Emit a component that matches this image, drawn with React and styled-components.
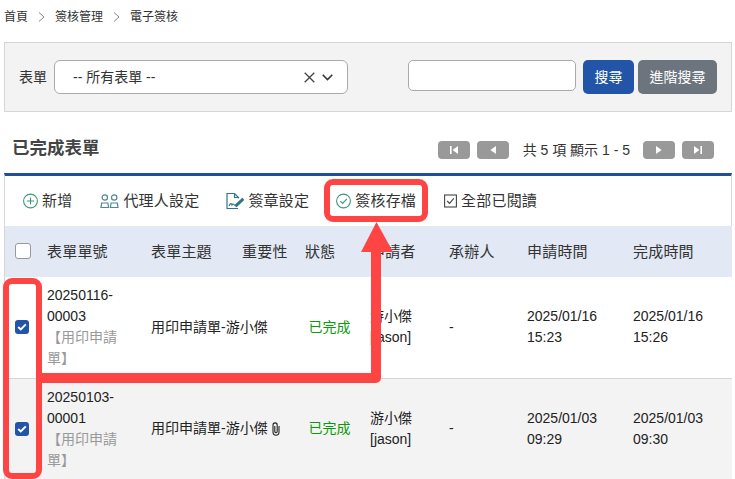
import React from 'react';
import styled, { createGlobalStyle } from 'styled-components';

const GlobalStyle = createGlobalStyle`
  html, body {
    margin: 0;
    padding: 0;
    height: 479px;
    overflow: hidden;
    background: #fff;
  }
  body {
    font-family: "Liberation Sans", "Noto Sans CJK TC", sans-serif;
    font-size: 14px;
    line-height: 21px;
    color: #222;
  }
`;

const Page = styled.div`
  position: relative;
  width: 735px;
  height: 479px;
  overflow: hidden;
  padding: 0 3px 0 4px;
  box-sizing: border-box;
`;

const Breadcrumb = styled.nav`
  display: flex;
  align-items: center;
  height: 42px;
  padding-bottom: 8px;
  box-sizing: border-box;
  font-size: 12px;
  color: #333;
`;

const Crumb = styled.span`
  line-height: 18px;
`;

const CrumbSep = styled.svg`
  width: 7px;
  height: 10px;
  margin: 0 10px;
  fill: none;
  stroke: #888;
  stroke-width: 1;
`;

const SearchPanel = styled.section`
  display: flex;
  align-items: flex-start;
  height: 70px;
  box-sizing: border-box;
  padding: 17px 14px 0 14px;
  background: #f3f3f3;
  border: 1px solid #d6d6d6;
`;

const FieldLabel = styled.label`
  flex: none;
  line-height: 34px;
  margin-right: 7px;
  color: #333;
`;

const SelectBox = styled.div`
  display: flex;
  align-items: center;
  flex: none;
  width: 294px;
  height: 34px;
  box-sizing: border-box;
  padding: 0 14px 0 18px;
  background: #fff;
  border: 1px solid #aaa;
  border-radius: 6px;
  color: #333;
`;

const SelectText = styled.span`
  flex: 1;
`;

const SearchInput = styled.input`
  flex: none;
  width: 168px;
  height: 31px;
  box-sizing: border-box;
  margin: 0 7px 0 60px;
  background: #fff;
  border: 1px solid #aaa;
  border-radius: 5px;
`;

const Button = styled.button`
  flex: none;
  height: 34px;
  width: ${(p) => p.$width}px;
  margin-right: ${(p) => p.$gap || 0}px;
  padding: 0;
  border: none;
  border-radius: 5px;
  background: ${(p) => p.$bg};
  color: #fff;
  font: inherit;
`;

const TitleRow = styled.div`
  display: flex;
  align-items: center;
  height: 61px;
  padding: 15px 18px 0 8px;
  box-sizing: border-box;
`;

const Title = styled.h2`
  flex: 1;
  margin: 0 0 4px;
  font-size: 17.5px;
  font-weight: 700;
  line-height: 24px;
  color: #444;
`;

const PagerButton = styled.button`
  display: flex;
  align-items: center;
  justify-content: center;
  width: 32px;
  height: 18px;
  margin-left: ${(p) => p.$gap || 0}px;
  padding: 0;
  border: none;
  border-radius: 4px;
  background: #999;
`;

const PagerIcon = styled.svg`
  width: 12px;
  height: 10px;
  fill: #fff;
`;

const PagerText = styled.span`
  margin: 0 13px 0 14px;
  color: #333;
  white-space: nowrap;
`;

const ListPanel = styled.section`
  border-top: 3px solid #1f4e9c;
  border-left: 1px solid #d6d6d6;
  border-right: 1px solid #d6d6d6;
`;

const Toolbar = styled.div`
  display: flex;
  align-items: center;
  height: 50px;
  padding: 0 0 1px 18px;
  box-sizing: border-box;
`;

const ToolItem = styled.span`
  display: flex;
  align-items: center;
  margin-right: ${(p) => p.$gap}px;
  font-size: 15px;
  letter-spacing: 0.2px;
  color: #333;
  white-space: nowrap;
`;

const ToolIcon = styled.svg`
  width: ${(p) => p.$size}px;
  height: 18px;
  margin-right: 4px;
  fill: none;
  flex: none;
`;

const Table = styled.table`
  width: 727px;
  table-layout: fixed;
  border-collapse: collapse;
`;

const HeadRow = styled.tr`
  height: 51px;
  background: #e2e8f4;
`;

const HeadCell = styled.th`
  padding: 0 0 1px 8px;
  font-size: 15px;
  font-weight: 400;
  letter-spacing: 0.2px;
  text-align: left;
  color: #333;
  white-space: nowrap;
`;

const Row = styled.tr`
  height: ${(p) => p.$height}px;
  background: ${(p) => (p.$alt ? '#f3f3f3' : '#fff')};
  border-bottom: 1px solid #d6d6d6;
`;

const Cell = styled.td`
  padding: 4px 8px;
  vertical-align: middle;
  word-break: normal;
  color: ${(p) => p.$color || '#222'};
  text-align: ${(p) => (p.$center ? 'center' : 'left')};
  box-sizing: border-box;
`;

const CheckCell = styled.td`
  padding: 0 0 0 10px;
  vertical-align: middle;
`;

const HeadCheckCell = styled.th`
  padding: 0 0 1px 10px;
  text-align: left;
`;

const CheckBox = styled.span`
  display: flex;
  align-items: center;
  justify-content: center;
  width: 14px;
  height: 14px;
  border-radius: 3px;
  background: ${(p) => (p.$checked ? '#2255a8' : '#fff')};
  border: ${(p) => (p.$checked ? '0' : '1px solid #999')};
`;

const FormType = styled.span`
  display: block;
  color: #999;
`;

const Nowrap = styled.span`
  white-space: nowrap;
`;

const Clip = styled.svg`
  width: 10px;
  height: 14px;
  margin-left: 3px;
  vertical-align: -3px;
  fill: none;
  stroke: #222;
  stroke-width: 1.1;
`;

// the red markup drawn over the screenshot
const Markup = styled.svg`
  position: absolute;
  left: 0;
  top: 0;
  width: 735px;
  height: 479px;
  pointer-events: none;
`;

const columns = [34, 104, 91, 63, 65, 79, 78, 106, 107];

const rows = [
  {
    no: ['20250116-', '00003'],
    subject: '用印申請單-游小傑',
    applied: ['2025/01/16', '15:23'],
    done: ['2025/01/16', '15:26'],
    height: 101,
  },
  {
    no: ['20250103-', '00001'],
    subject: '用印申請單-游小傑',
    attachment: true,
    applied: ['2025/01/03', '09:29'],
    done: ['2025/01/03', '09:30'],
    alt: true,
    height: 101,
  },
];

const Check = () => (
  <svg width="10" height="8" viewBox="0 0 10 8" fill="none" stroke="#fff" strokeWidth="2">
    <path d="M1.2 4 L3.8 6.4 L8.8 1.4" />
  </svg>
);

const Lines = ({ items }) => (
  <>
    {items.map((t) => (
      <div key={t}>{t}</div>
    ))}
  </>
);

const App = () => (
  <Page>
    <GlobalStyle />
    <Breadcrumb>
      <Crumb>首頁</Crumb>
      <CrumbSep viewBox="0 0 7 10"><path d="M1 0.5 L6 5 L1 9.5" /></CrumbSep>
      <Crumb>簽核管理</Crumb>
      <CrumbSep viewBox="0 0 7 10"><path d="M1 0.5 L6 5 L1 9.5" /></CrumbSep>
      <Crumb>電子簽核</Crumb>
    </Breadcrumb>

    <SearchPanel>
      <FieldLabel>表單</FieldLabel>
      <SelectBox>
        <SelectText>-- 所有表單 --</SelectText>
        <svg width="11" height="11" viewBox="0 0 11 11" stroke="#444" strokeWidth="1.3" fill="none">
          <path d="M0.7 0.7 L10.3 10.3 M10.3 0.7 L0.7 10.3" />
        </svg>
        <svg width="11" height="7" viewBox="0 0 11 7" stroke="#333" strokeWidth="1.5" fill="none" style={{ marginLeft: 7 }}>
          <path d="M0.7 0.8 L5.5 5.6 L10.3 0.8" />
        </svg>
      </SelectBox>
      <SearchInput />
      <Button $width={51} $gap={4} $bg="#2255a8">搜尋</Button>
      <Button $width={79} $bg="#6c757d">進階搜尋</Button>
    </SearchPanel>

    <TitleRow>
      <Title>已完成表單</Title>
      <PagerButton>
        <PagerIcon viewBox="0 0 12 10"><path d="M2 1 H3.6 V9 H2 Z M10 1 V9 L4.6 5 Z" /></PagerIcon>
      </PagerButton>
      <PagerButton $gap={7}>
        <PagerIcon viewBox="0 0 12 10"><path d="M9 1 V9 L3.4 5 Z" /></PagerIcon>
      </PagerButton>
      <PagerText>共 5 項 顯示 1 - 5</PagerText>
      <PagerButton>
        <PagerIcon viewBox="0 0 12 10"><path d="M3 1 V9 L8.6 5 Z" /></PagerIcon>
      </PagerButton>
      <PagerButton $gap={7}>
        <PagerIcon viewBox="0 0 12 10"><path d="M2 1 V9 L7.4 5 Z M8.4 1 H10 V9 H8.4 Z" /></PagerIcon>
      </PagerButton>
    </TitleRow>

    <ListPanel>
      <Toolbar>
        <ToolItem $gap={28}>
          <ToolIcon $size={15} viewBox="0 0 15 18" stroke="#3a9a78" strokeWidth="1.1">
            <circle cx="7.5" cy="9" r="6.9" />
            <path d="M7.5 5.4 V12.6 M3.9 9 H11.1" />
          </ToolIcon>
          新增
        </ToolItem>
        <ToolItem $gap={27}>
          <ToolIcon $size={19} viewBox="0 0 19 18" stroke="#4f8796" strokeWidth="1.2">
            <circle cx="4.8" cy="5.5" r="2.7" />
            <path d="M1 15.5 L1.7 11 H7.9 L8.6 15.5 Z" />
            <circle cx="14.2" cy="5.5" r="2.7" />
            <path d="M10.4 15.5 L11.1 11 H17.3 L18 15.5 Z" />
          </ToolIcon>
          代理人設定
        </ToolItem>
        <ToolItem $gap={27}>
          <ToolIcon $size={18} viewBox="0 0 18 18" stroke="#2f7688" strokeWidth="1.2">
            <path d="M12 16.5 H1 V1.5 H8.5 L12.5 5.5 V6.5 M8.5 1.5 V5.5 H12.5" />
            <path d="M3 14 C4.5 11 5.5 11 6 13 C7 11.5 7.5 12.5 8.5 13" />
            <path d="M9 13.5 L16.3 6.5 L17.5 7.8 L10.5 14.5 Z" fill="#2f7688" />
          </ToolIcon>
          簽章設定
        </ToolItem>
        <ToolItem $gap={28}>
          <ToolIcon $size={15} viewBox="0 0 15 18" stroke="#3a9a78" strokeWidth="1.1">
            <circle cx="7.5" cy="9" r="6.9" />
            <path d="M4.2 9.2 L6.6 11.4 L10.9 6.8" />
          </ToolIcon>
          簽核存檔
        </ToolItem>
        <ToolItem $gap={0}>
          <ToolIcon $size={13} viewBox="0 0 13 18" stroke="#444" strokeWidth="1.1">
            <rect x="0.6" y="3" width="11.8" height="12" />
            <path d="M3.2 9 L5.6 11.4 L9.8 6.4" />
          </ToolIcon>
          全部已閱讀
        </ToolItem>
      </Toolbar>

      <Table>
        <colgroup>
          {columns.map((w, i) => (
            <col key={i} style={{ width: w }} />
          ))}
        </colgroup>
        <thead>
          <HeadRow>
            <HeadCheckCell><CheckBox /></HeadCheckCell>
            <HeadCell>表單單號</HeadCell>
            <HeadCell>表單主題</HeadCell>
            <HeadCell>重要性</HeadCell>
            <HeadCell>狀態</HeadCell>
            <HeadCell>申請者</HeadCell>
            <HeadCell>承辦人</HeadCell>
            <HeadCell>申請時間</HeadCell>
            <HeadCell>完成時間</HeadCell>
          </HeadRow>
        </thead>
        <tbody>
          {rows.map((r) => (
            <Row key={r.no[0]} $alt={r.alt} $height={r.height}>
              <CheckCell><CheckBox $checked><Check /></CheckBox></CheckCell>
              <Cell>
                <Lines items={r.no} />
                <FormType>【用印申請單】</FormType>
              </Cell>
              <Cell colSpan={2}>
                <Nowrap>
                  {r.subject}
                  {r.attachment && (
                    <Clip viewBox="0 0 10 14">
                      <path d="M8 4 V10 C8 11.8 6.7 13.2 5 13.2 C3.3 13.2 2 11.8 2 10 V3.2 C2 1.9 2.9 0.9 4.1 0.9 C5.3 0.9 6.2 1.9 6.2 3.2 V9.6 C6.2 10.3 5.7 10.8 5 10.8 C4.3 10.8 3.8 10.3 3.8 9.6 V4" />
                    </Clip>
                  )}
                </Nowrap>
              </Cell>
              <Cell $center $color="#0a9a0a">已完成</Cell>
              <Cell>游小傑<br />[jason]</Cell>
              <Cell>-</Cell>
              <Cell><Lines items={r.applied} /></Cell>
              <Cell><Lines items={r.done} /></Cell>
            </Row>
          ))}
        </tbody>
      </Table>
    </ListPanel>

    <Markup viewBox="0 0 735 479">
      <g fill="none" stroke="#ff4444">
        <rect x="327" y="182" width="98" height="37" rx="6" strokeWidth="6" />
        <rect x="6" y="281" width="33" height="195" rx="6" strokeWidth="6" />
        <path d="M42 378 H376 V250" strokeWidth="10" strokeLinejoin="round" />
      </g>
      <path d="M376.5 222 L393 252 H361 Z" fill="#ff4444" />
    </Markup>
  </Page>
);

export default App;
